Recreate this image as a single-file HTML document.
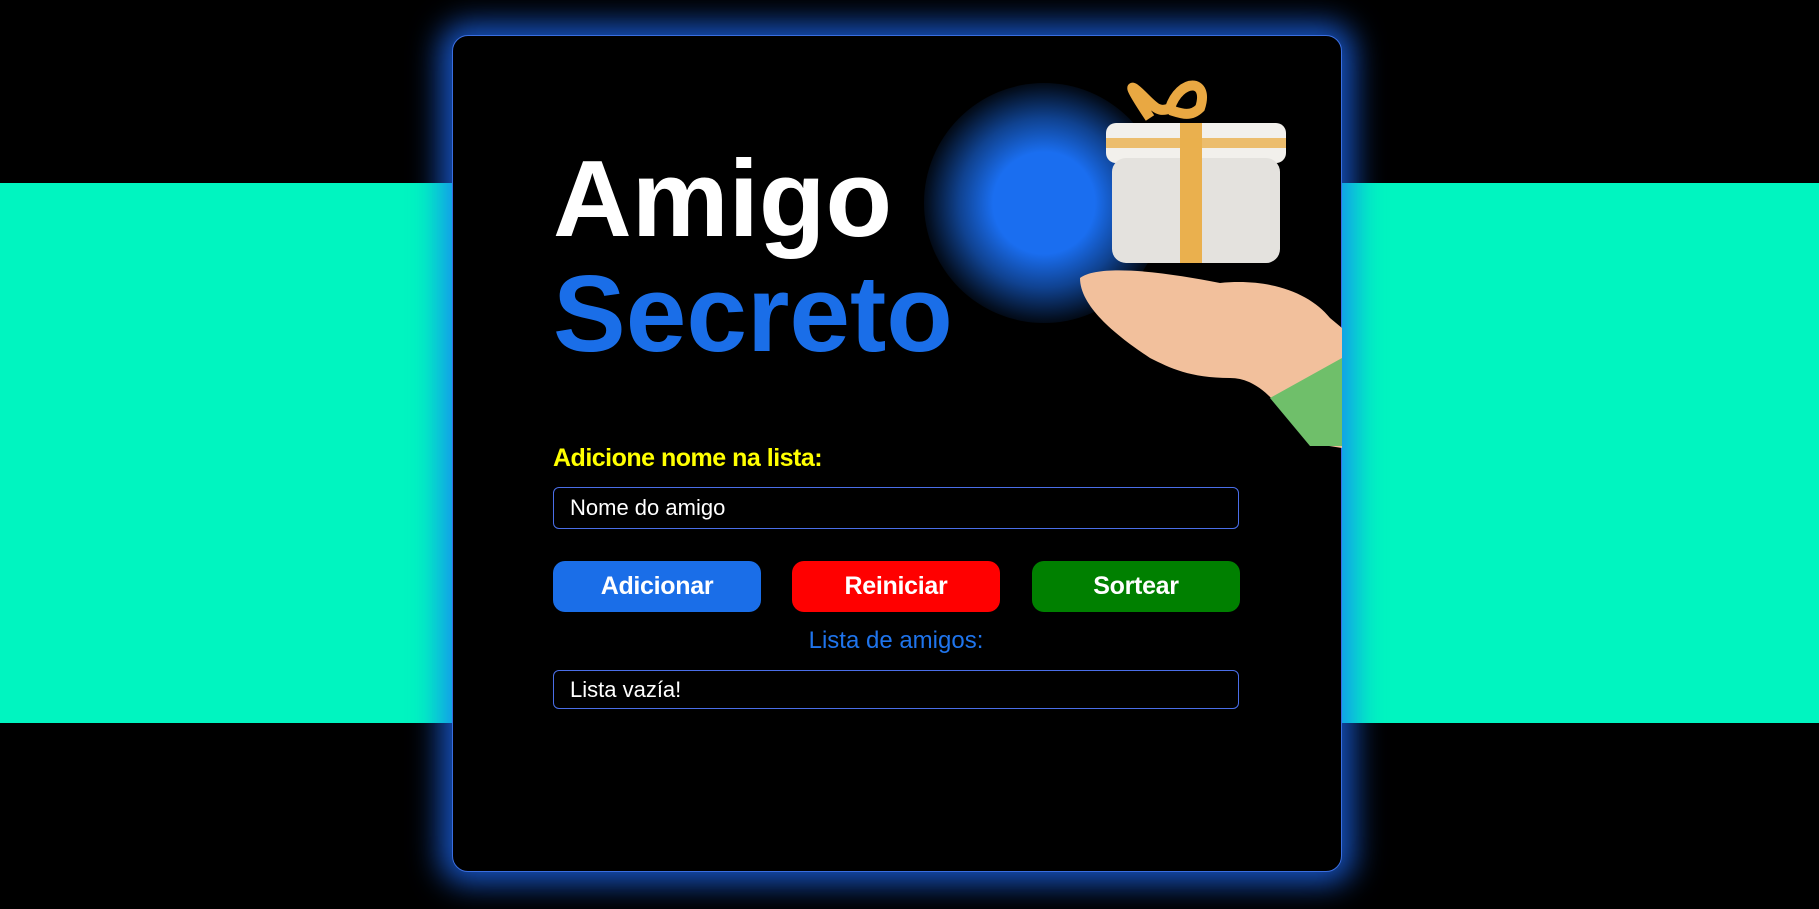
<!DOCTYPE html>
<html><head><meta charset="utf-8"><style>
html,body{margin:0;padding:0;width:1819px;height:909px;overflow:hidden;background:#000;font-family:"Liberation Sans",sans-serif}
.band{position:absolute;left:0;top:183px;width:1819px;height:540px;background:#00f5c0}
.card{position:absolute;left:452px;top:35px;width:888px;height:835px;background:#000;border:1px solid #3a6ee0;border-radius:16px;box-shadow:0 0 30px 12px rgba(30,110,255,.75);overflow:hidden}
.glow{position:absolute;left:1044px;top:203px;width:240px;height:240px;margin:-120px;border-radius:50%;background:radial-gradient(circle,#1a6ef0 0%,#1a6ef0 30%,rgba(26,110,240,.6) 50%,rgba(26,110,240,.15) 68%,rgba(0,0,0,0) 75%)}
.t{position:absolute;left:553px;font-weight:bold;font-size:109px;line-height:1;letter-spacing:0}
.label{position:absolute;left:553px;top:444px;color:#ffff00;font-weight:bold;font-size:25px;letter-spacing:-.5px}
.box{position:absolute;left:553px;width:686px;border:1px solid #4a6ee8;border-radius:6px;color:#fff;font-size:22px;box-sizing:border-box;padding-left:16px}
.btn{position:absolute;top:561px;height:51px;width:208px;border-radius:12px;color:#fff;font-weight:bold;font-size:25px;text-align:center;line-height:51px;letter-spacing:-.3px}
</style></head><body>
<div class="band"></div>
<div class="card"></div>
<div class="glow"></div>
<div class="t" style="top:145px;color:#fff">Amigo</div>
<div class="t" style="top:260px;color:#1a6ee8">Secreto</div>
<svg style="position:absolute;left:1070px;top:78px" width="272" height="370" viewBox="0 0 272 370">
<path d="M80 40 C60 10,55 0,75 20 C85 30,90 35,100 30 C110 0,140 0,130 30 C120 40,110 35,100 32" fill="none" stroke="#e9a842" stroke-width="10"/>
<rect x="36" y="45" width="180" height="40" rx="10" fill="#f2f0ec"/>
<rect x="42" y="80" width="168" height="105" rx="14" fill="#e4e2de"/>
<rect x="110" y="45" width="22" height="140" fill="#eab04e"/>
<rect x="36" y="60" width="180" height="10" fill="#eab04e" opacity=".8"/>
<path d="M10 200 C30 185,100 195,150 205 C200 200,240 215,260 240 L272 250 L272 370 L240 365 C220 350,200 300,160 300 C120 300,100 290,80 280 C50 260,10 230,10 200Z" fill="#f2c09c"/>
<path d="M200 320 L272 280 L272 368 L240 368Z" fill="#6fbf6a"/>
</svg>
<div class="label">Adicione nome na lista:</div>
<div class="box" style="top:487px;height:42px;line-height:40px">Nome do amigo</div>
<div class="btn" style="left:553px;background:#1a6ee8">Adicionar</div>
<div class="btn" style="left:792px;background:#ff0000">Reiniciar</div>
<div class="btn" style="left:1032px;background:#008000">Sortear</div>
<div style="position:absolute;left:553px;width:686px;top:627px;text-align:center;color:#1f74ec;font-size:24px">Lista de amigos:</div>
<div class="box" style="top:670px;height:39px;line-height:37px">Lista vazía!</div>
</body></html>
